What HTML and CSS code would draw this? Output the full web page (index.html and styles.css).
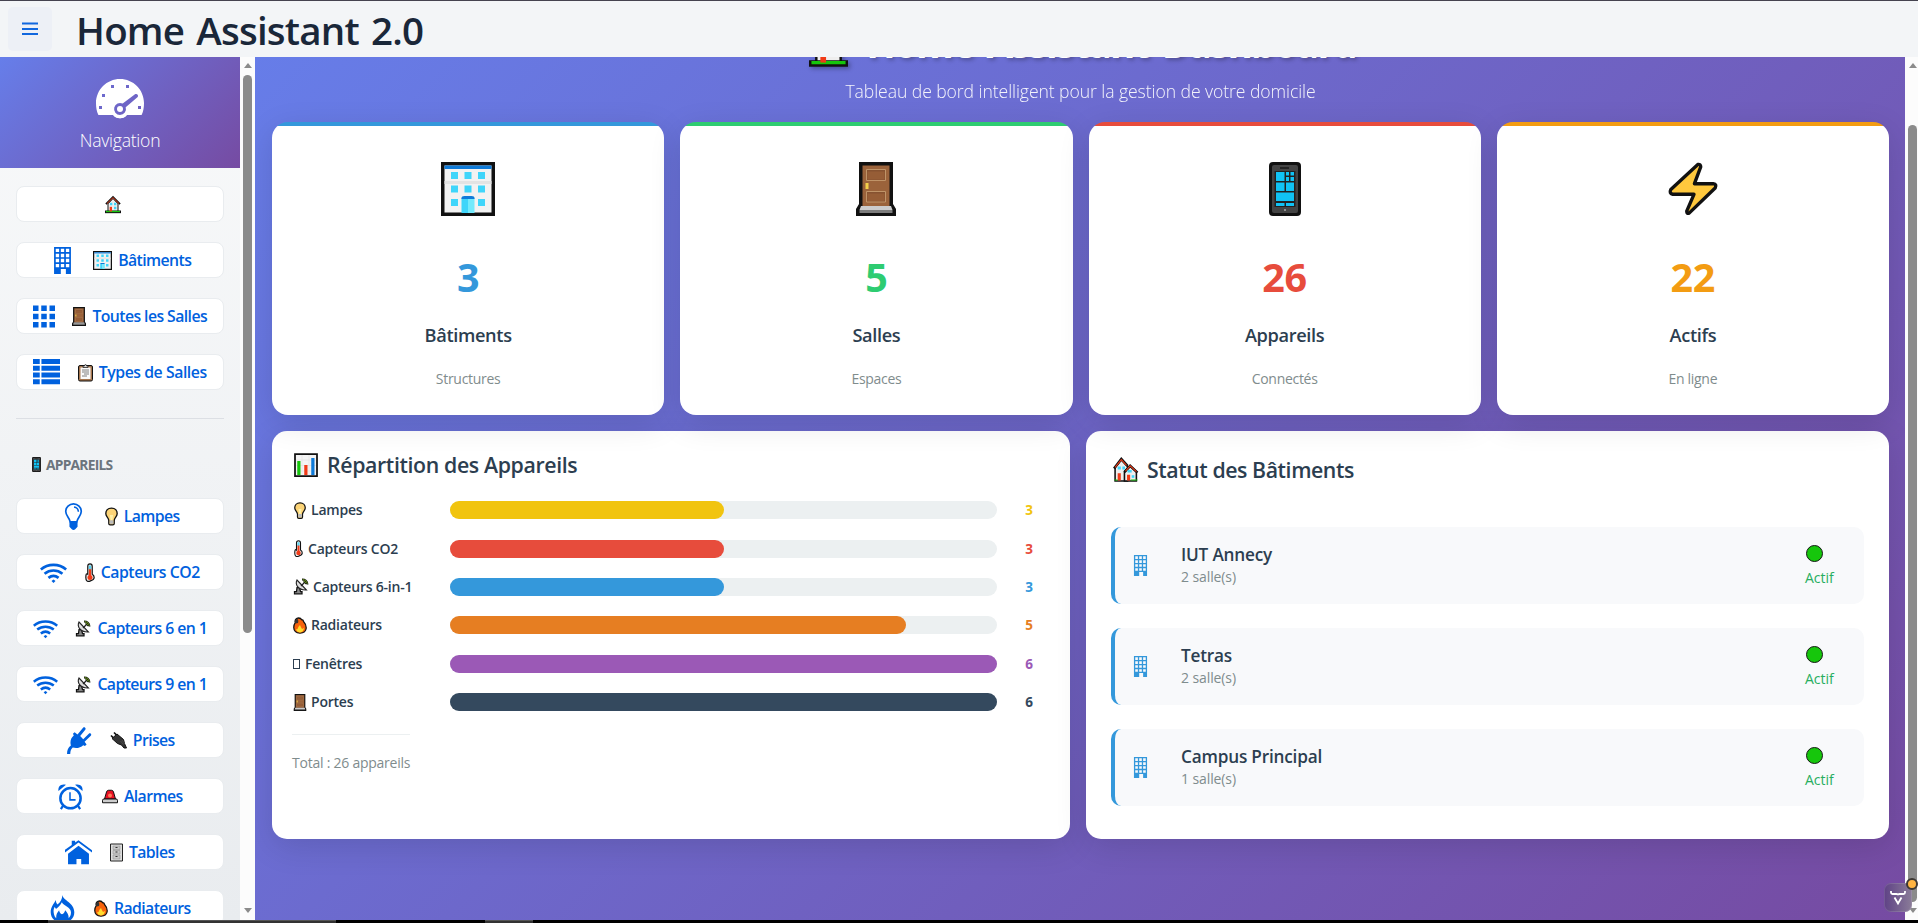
FILE: index.html
```
<!DOCTYPE html>
<html lang="fr">
<head>
<meta charset="utf-8">
<title>Home Assistant 2.0</title>
<link rel="stylesheet" href="styles.css">
</head>
<body>
<svg class="defs" aria-hidden="true">
  <symbol id="i-building" viewBox="0 0 16 16"><path fill-rule="evenodd" d="M3 0h10v16h-3v-3H7v3H3zM4 1v2h2V1zm3 0v2h2V1zm3 0v2h2V1zM4 4v2h2V4zm3 0v2h2V4zm3 0v2h2V4zM4 7v2h2V7zm3 0v2h2V7zm3 0v2h2V7zM4 10v2h2v-2zm3 0v2h2v-2zm3 0v2h2v-2z"/></symbol>
  <symbol id="i-grid" viewBox="0 0 16 16"><path d="M0 0h4v4H0zM6 0h4v4H6zM12 0h4v4h-4zM0 6h4v4H0zM6 6h4v4H6zM12 6h4v4h-4zM0 12h4v4H0zM6 12h4v4H6zM12 12h4v4h-4z"/></symbol>
  <symbol id="i-list" viewBox="0 0 16 16"><path d="M0 0h4v3H0zM5 0h11v3H5zM0 4h4v3H0zM5 4h11v3H5zM0 8h4v3H0zM5 8h11v3H5zM0 12h4v3H0zM5 12h11v3H5z"/></symbol>
  <symbol id="i-bulb" viewBox="0 0 16 16"><path d="M8 .5a4.600 4.600 0 0 0-4.600 4.600c0 2.300 2.300 3.700 2.600 6h4c.3-2.300 2.600-3.700 2.600-6A4.600 4.600 0 0 0 8 .5z" fill="none" stroke="currentColor"/><path d="M8.300 2.300a2.900 2.900 0 0 1 2.600 2.900" fill="none" stroke="currentColor" stroke-width=".9"/><path d="M5.600 11h4.800v3L9 15.500c-.5.6-1.500.6-2 0L5.600 14z"/></symbol>
  <symbol id="i-wifi" viewBox="0 0 16 16"><g fill="none" stroke="currentColor" stroke-width="1.600"><path d="M.5 6.200c4.200-3.600 10.800-3.600 15 0M2.700 8.700c3.100-2.500 7.500-2.500 10.600 0M5 11.200c1.900-1.500 4.100-1.500 6 0"/></g><path d="M8 12.200l1.200.8L8 14.200 6.800 13z"/></symbol>
  <symbol id="i-plug" viewBox="0 0 16 16"><path d="M1.200 16c0-2.300.7-4 2.300-5-.7-2.300 0-4.500 1.700-5.900L4.700 4l1-.9 1.700 1.400 3.300-4c.8-.8 2 .3 1.300 1.100L9 5.400l1.800 1.800 3.300-3.200c.9-.7 1.900.4 1.200 1.200l-3.700 3.600 1.200 1.600-1 .9-1-.5c-1.600 1.600-4 2-6.200 1.400-1 .8-1.400 2-1.500 3.800z"/></symbol>
  <symbol id="i-alarm" viewBox="0 0 16 16"><g fill="none" stroke="currentColor"><circle cx="8" cy="9" r="6" stroke-width="1.500"/><path d="M7.700 5.500V10H11" stroke-width=".9"/><path d="M3.700 13.300L2.300 15.500M12.300 13.300l1.400 2.200" stroke-width="1.300"/></g><path d="M.9 4.800C.4 2 2.500.2 5.300 1.100zM15.100 4.800c.5-2.800-1.600-4.600-4.400-3.700z"/></symbol>
  <symbol id="i-home" viewBox="0 0 16 16"><path d="M16 8L8 2.100 0 8l-.1-1.500L4 3.600V1h2v1.100L8 .7l8 5.900zM8 4l6.200 4.700V15H9.600v-3.200H6.800V15H1.800V8.700z"/></symbol>
  <symbol id="i-fire" viewBox="0 0 16 16"><path fill-rule="evenodd" d="M7.900 0C8.300 3.300 15 4.500 15 10.200c0 2.900-1.700 4.800-4 5.800H5C2.700 15 1 13 1 10.200c0-3 1.700-4.800 3.100-7.200 0 1.300.3 2 .9 2.600C6.800 4.300 7.800 2.600 7.900 0zM7.600 4.300C6.800 6 5.500 7.300 4.300 8.200 3.800 7.900 3.600 7.600 3.500 7 2.600 8.300 2.500 9.700 3 11.500c.2.900.7 1.700 1.300 2.300-.2-1.900.4-3.300 1.700-4.800.2 1.300.7 2 1.700 2.400.9-.3 1.500-1 1.900-2.400 1.400 1.500 2.200 3 2 4.800 1-1 1.500-2.300 1.400-3.800-.2-2.800-4-3.300-5.400-5.700z"/></symbol>

  <symbol id="e-house" viewBox="0 0 24 26"><path d="M4.500 12v12h15V12L12 4z" fill="#eee" stroke="#111" stroke-width="1.500"/><path d="M1.500 12.500L12 2l10.500 10.500" fill="none" stroke="#111" stroke-width="3"/><path d="M3 11.500L12 2.700l9 8.800" fill="none" stroke="#e8401c" stroke-width="1.500"/><path fill="#3fd5fa" d="M7.500 10.500h3.500v3.500H7.500zM13.500 10.500H17V14h-3.500zM13.500 16.500H17V20h-3.500z"/><path fill="#111" d="M0 22h24v4H0z"/><path fill="#16c60c" d="M1.500 22.500H22.500V24.500h-21z"/><path fill="#f03a17" d="M7 16.500h3.500v7H7z"/></symbol>
  <symbol id="e-office" viewBox="0 0 54 54"><path fill="#111" d="M0 0h54v54H0z"/><path fill="#f2f2f2" d="M3.500 3.500h47v47h-47z"/><path fill="#0f7bd9" d="M3.500 3.500h47V7h-47z"/><path fill="#e3e3e3" d="M3.500 19h47v3h-47z"/><path fill="#3fd5fa" d="M10 10h7v7h-7zM23.500 10h7v7h-7zM37 10h7v7h-7zM10 23.500h7v7h-7zM23.500 23.500h7v7h-7zM37 23.500h7v7h-7zM10 37h7v7h-7zM37 37h7v7h-7zM20.500 36H27v15h-6.500z"/><path fill="#74eafc" d="M27 36h6.500v15H27z"/><path fill="#0f7bd9" d="M20.500 37v-1q0-2 3-2h7q3 0 3 2v1z"/></symbol>
  <symbol id="e-door" viewBox="0 0 40 54"><path fill="#111" d="M3 0h34v42l3 5v7H0v-7l3-5z"/><path fill="#9b633b" d="M6.500 3.500h27V44h-27z"/><path fill="#865230" stroke="#c09468" d="M10.500 7.500h19v11h-19zM10.500 29.500h19v10.500h-19z"/><path fill="#965d36" d="M11.500 9.500h17v8h-17zM11.500 31.500h17V39h-17z"/><path fill="#f2d04a" d="M9.500 21h3v6h-3z"/><path fill="#ccc" d="M5 44h30l1.500 4h-33z"/><path fill="#7c7c7c" d="M3.500 48h33v3h-33z"/></symbol>
  <symbol id="e-clip" viewBox="0 0 30 36"><rect x="1" y="4" width="28" height="31" rx="3" fill="#a5754d" stroke="#111" stroke-width="2"/><path fill="#fafafa" d="M5 8h20v23H5z"/><path d="M10 8V5h3q0-3 2-3t2 3h3v3z" fill="#ddd" stroke="#222" stroke-width="1.500"/><path stroke="#555" stroke-width="1.500" d="M8 13h14M8 17h14M12 21h10M8 25h10"/></symbol>
  <symbol id="e-phone" viewBox="0 0 32 54"><rect width="32" height="54" rx="4" fill="#111"/><rect x="3" y="3" width="26" height="48" rx="2" fill="#444"/><path fill="#222" d="M5.500 9h21v36h-21zM11 5h9v2h-9z"/><path fill="#10c3f5" d="M7 10h8.500v9H7zM17 10h3v3.500h-3zM21.500 10H25v3.500h-3.500zM17 15h3v4h-3zM21.500 15H25v4h-3.500zM7 20.500h8.500V29H7zM17 20.500h8V29h-8zM7 30.500h18V39H7zM7 41h8.500v3H7zM17 41h8v3h-8z"/><circle cx="16" cy="48" r="1" fill="#aaa"/></symbol>
  <symbol id="e-bolt" viewBox="0 0 54 56"><path d="M32 2.500L4 28.500Q2 32.500 6 33.500H28L20.500 51q0 3 2.500 2L50 27q2-4-2-4.500H28.500L35 5q0-3-3-2.500z" fill="#ffc83d" stroke="#111" stroke-width="3.500" stroke-linejoin="round"/></symbol>
  <symbol id="e-bulb" viewBox="0 0 24 34"><path d="M12 1.500C5 1.500 1.500 6.500 1.500 11.500c0 6 5 7 5.500 13V30q0 2.500 2.500 2.500h5Q17 32.500 17 30v-5.500c.5-6 5.500-7 5.500-13 0-5-3.500-10-10.500-10z" fill="#fcd477" stroke="#111" stroke-width="2.500"/><path fill="#fff0a8" d="M9 14h6l-1.500 10h-3z"/><path fill="#bbb" d="M8.500 24h7v6.500h-7z"/></symbol>
  <symbol id="e-thermo" viewBox="0 0 18 34"><path d="M5 6q0-4.500 4-4.500T13 6v14q3.500 2 3.500 6T9 32.500 1.500 26 5 20z" fill="#eee" stroke="#111" stroke-width="2.200"/><path fill="#55d5f5" d="M7 4.500h4V12H7z"/><path d="M9 11v14" stroke="#f03a17" stroke-width="4"/><circle cx="9" cy="26" r="4.500" fill="#f03a17"/></symbol>
  <symbol id="e-dish" viewBox="0 0 32 34"><path d="M3 31.500V27h4l1-8h5l2 8h3v4.500z" fill="#888" stroke="#111" stroke-width="2.500"/><path d="M8 4C4 12 9 25 27 24z" fill="#ddd" stroke="#222" stroke-width="2.200"/><path d="M16 16l6-6" stroke="#222" stroke-width="2.500"/><path d="M18 3q10 0 11 10M21 7q4 1 5 5" stroke="#161616" stroke-width="4" fill="none"/><path d="M19 2.500q9 1 10 9M21 6q4 1 5 5" stroke="#6c9b16" stroke-width="1.700" fill="none"/></symbol>
  <symbol id="e-plug" viewBox="0 0 34 34"><path d="M2 7l5 5M8 1l5 5" stroke="#111" stroke-width="3.500"/><path d="M4 13L14 4l13 11 2 8 4 9h-5l-5-6-8-3z" fill="#333" stroke="#111" stroke-width="2"/><path d="M21 18l6 7M24 16l6 8" stroke="#666" stroke-width="1"/></symbol>
  <symbol id="e-siren" viewBox="0 0 32 28"><path d="M5 19L9 5q1-3.500 4-3.500h6q3 0 4 3.500l4 14z" fill="#e81224" stroke="#111" stroke-width="2"/><circle cx="16" cy="12" r="4" fill="#ff7a58"/><path fill="#ccc" stroke="#111" stroke-width="2" d="M1 26.500v-5Q1 19 4 19h24q3 0 3 2.500v5z"/></symbol>
  <symbol id="e-cabinet" viewBox="0 0 26 36"><path fill="#ddd" stroke="#222" stroke-width="2" d="M1 1h24v34H1z"/><path fill="#c8c8c8" stroke="#888" d="M6 5h14v7H6zM6 14h14v7H6zM6 23h14v8H6z"/><path stroke="#333" stroke-width="2" d="M11 8h4M11 17h4M11 26h4"/></symbol>
  <symbol id="e-fire" viewBox="0 0 28 34"><path d="M7 3q7-3 11 3c2-1 2 0 3 3 3 3 5.500 8 5.500 13q-1 10-12.500 10.500Q2 32 1.500 21q0-6 3-10Q3 6 7 3z" fill="#f7630c" stroke="#111" stroke-width="2.500"/><path d="M7 3q5 1 3 9l-5 1q-2-7 2-10z" fill="#333"/><path d="M6 24q2 1 3 0 2-6 5-8 2 5 4 8l4-2q-1 8-8 9-7-1-8-7z" fill="#ffdc2e"/></symbol>
  <symbol id="e-chart" viewBox="0 0 48 48"><path fill="#f4f4f4" stroke="#111" stroke-width="3.500" d="M2 2h44v44H2z"/><path stroke="#ddd" d="M4 14h40M4 25h40M4 36h40M16 4v40M30 4v40"/><path fill="#16c60c" d="M6.500 16H13v28H6.500z"/><path fill="#f03a17" d="M20.500 24H27v20h-6.500z"/><path fill="#0f7bd9" d="M34.500 10H41v34h-6.500z"/></symbol>
  <symbol id="e-houses" viewBox="0 0 50 48"><path fill="#eee" stroke="#111" stroke-width="3" d="M4 46V20L16 5l12 13v28z"/><path fill="#eee" stroke="#111" stroke-width="3" d="M22 46V28l11-11 12 11v18z"/><path d="M2 22L16 4l12 13M22 29l11-12 14 13" fill="none" stroke="#111" stroke-width="5"/><path d="M4 20L16 5l10 11M24 27l9-10 12 11" fill="none" stroke="#f03a17" stroke-width="2"/><path fill="#3fd5fa" d="M9 18h6v6H9zM18 18h5v6h-5zM28 25h8v5h-8z"/><path fill="#f03a17" d="M9 31h6v14H9zM27 34h6v11h-6z"/><path fill="#3fd5fa" d="M36 35h5v5h-5z"/><path stroke="#16c60c" stroke-width="2" d="M3 44h6M34 44h13"/></symbol>
</svg>

<div class="app">
  <header class="navbar">
    <button class="toggle" aria-label="Menu"><svg viewBox="0 0 16 14"><path d="M0 .6h16v2H0zM0 6h16v2H0zM0 11h16v2H0z"/></svg></button>
    <h1>Home Assistant 2.0</h1>
  </header>

  <div class="body">
    <nav class="drawer">
      <div class="drawer-head">
        <svg class="gauge" viewBox="0 0 16 16"><path fill="#fff" fill-rule="evenodd" d="M8 1C3.600 1 0 4.600 0 9c0 1.400.2 2.800.8 4h4.900a3 3 0 0 0 4.600 0h4.900c.6-1.200.8-2.600.8-4 0-4.400-3.600-8-8-8zM5 3h1v1H5zm5 0h1v1h-1zM2 6h1v1H2zM1 10h1v1H1zm13 0h1v1h-1zM8 13a2 2 0 1 1 .9-3.800L13 6.100c.6-.4 1.300.3.9.9L9.900 10.400A2 2 0 0 1 8 13z"/><circle cx="8" cy="11" r="1" fill="#fff"/><path d="M5.700 13a3 3 0 0 0 4.600 0z" fill="#fff"/></svg>
        <span>Navigation</span>
      </div>
      <div class="menu">
        <a class="item solo"><svg class="em" style="width:16px"><use href="#e-house"/></svg></a>
        <a class="item"><svg class="ic"><use href="#i-building"/></svg><svg class="em" style="width:19px"><use href="#e-office"/></svg><b>Bâtiments</b></a>
        <a class="item"><svg class="ic" style="width:22px"><use href="#i-grid"/></svg><svg class="em" style="width:14px"><use href="#e-door"/></svg><b>Toutes les Salles</b></a>
        <a class="item"><svg class="ic"><use href="#i-list"/></svg><svg class="em" style="width:15px"><use href="#e-clip"/></svg><b class="types">Types de Salles</b></a>
      </div>
      <div class="rule"></div>
      <div class="section"><svg><use href="#e-phone"/></svg><span>APPAREILS</span></div>
      <div class="menu devices">
        <a class="item"><svg class="ic"><use href="#i-bulb"/></svg><svg class="em" style="width:13px"><use href="#e-bulb"/></svg><b>Lampes</b></a>
        <a class="item"><svg class="ic"><use href="#i-wifi"/></svg><svg class="em" style="width:10px"><use href="#e-thermo"/></svg><b class="types">Capteurs CO2</b></a>
        <a class="item"><svg class="ic" style="width:25px"><use href="#i-wifi"/></svg><svg class="em" style="width:16px"><use href="#e-dish"/></svg><b>Capteurs 6 en 1</b></a>
        <a class="item"><svg class="ic" style="width:25px"><use href="#i-wifi"/></svg><svg class="em" style="width:16px"><use href="#e-dish"/></svg><b>Capteurs 9 en 1</b></a>
        <a class="item"><svg class="ic"><use href="#i-plug"/></svg><svg class="em" style="width:17px"><use href="#e-plug"/></svg><b>Prises</b></a>
        <a class="item"><svg class="ic"><use href="#i-alarm"/></svg><svg class="em" style="width:16px"><use href="#e-siren"/></svg><b>Alarmes</b></a>
        <a class="item"><svg class="ic"><use href="#i-home"/></svg><svg class="em" style="width:13px"><use href="#e-cabinet"/></svg><b>Tables</b></a>
        <a class="item"><svg class="ic"><use href="#i-fire"/></svg><svg class="em" style="width:14px"><use href="#e-fire"/></svg><b>Radiateurs</b></a>
      </div>
    </nav>
    <div class="bar left"><i class="up"></i><i class="thumb"></i><i class="down"></i></div>

    <main>
      <div class="content">
        <div class="hero">
          <h2><svg><use href="#e-house"/></svg><span>Home Assistant Dashboard</span></h2>
          <p>Tableau de bord intelligent pour la gestion de votre domicile</p>
        </div>
        <div class="stats">
          <section class="stat blue"><svg><use href="#e-office"/></svg><strong>3</strong><h3>Bâtiments</h3><p>Structures</p></section>
          <section class="stat green"><svg><use href="#e-door"/></svg><strong>5</strong><h3>Salles</h3><p>Espaces</p></section>
          <section class="stat red"><svg><use href="#e-phone"/></svg><strong>26</strong><h3>Appareils</h3><p>Connectés</p></section>
          <section class="stat orange"><svg><use href="#e-bolt"/></svg><strong>22</strong><h3>Actifs</h3><p>En ligne</p></section>
        </div>
        <div class="panels">
          <section class="panel chart">
            <h3><svg><use href="#e-chart"/></svg><span>Répartition des Appareils</span></h3>
            <div class="row" style="color:#f1c40f"><div class="name"><svg style="width:14px"><use href="#e-bulb"/></svg>Lampes</div><div class="track"><div class="fill" style="width:50%"></div></div><b>3</b></div>
            <div class="row" style="color:#e74c3c"><div class="name"><svg style="width:11px"><use href="#e-thermo"/></svg>Capteurs CO2</div><div class="track"><div class="fill" style="width:50%"></div></div><b>3</b></div>
            <div class="row" style="color:#3498db"><div class="name"><svg style="width:16px"><use href="#e-dish"/></svg>Capteurs 6-in-1</div><div class="track"><div class="fill" style="width:50%"></div></div><b>3</b></div>
            <div class="row" style="color:#e67e22"><div class="name"><svg style="width:14px"><use href="#e-fire"/></svg>Radiateurs</div><div class="track"><div class="fill" style="width:83.333%"></div></div><b>5</b></div>
            <div class="row" style="color:#9b59b6"><div class="name"><i class="tofu"></i>Fenêtres</div><div class="track"><div class="fill" style="width:100%"></div></div><b>6</b></div>
            <div class="row" style="color:#34495e"><div class="name"><svg style="width:14px"><use href="#e-door"/></svg>Portes</div><div class="track"><div class="fill" style="width:100%"></div></div><b>6</b></div>
            <p class="total">Total : 26 appareils</p>
          </section>
          <section class="panel status">
            <h3><svg><use href="#e-houses"/></svg><span>Statut des Bâtiments</span></h3>
            <div class="site"><svg><use href="#i-building"/></svg><div class="info"><h4>IUT Annecy</h4><p>2 salle(s)</p></div><div class="state"><i></i><span>Actif</span></div></div>
            <div class="site"><svg><use href="#i-building"/></svg><div class="info"><h4>Tetras</h4><p>2 salle(s)</p></div><div class="state"><i></i><span>Actif</span></div></div>
            <div class="site"><svg><use href="#i-building"/></svg><div class="info"><h4>Campus Principal</h4><p>1 salle(s)</p></div><div class="state"><i></i><span>Actif</span></div></div>
          </section>
        </div>
      </div>
    </main>
    <div class="bar right"><i class="up"></i><i class="thumb"></i><i class="down"></i></div>
  </div>
  <footer class="strip"><i class="seg wide"></i><i class="seg short"></i></footer>
  <div class="devtools"><svg viewBox="0 0 28 29"><path d="M7 8v1.500q0 1.500 1.500 1.500h4q1.500 0 1.500 1.200 0-1.200 1.500-1.200h4Q21 11 21 9.500V8M10.500 14.500L14 20.500l3.500-6" fill="none" stroke="#fff" stroke-width="1.800"/></svg><i></i></div>
</div>
</body>
</html>
```
FILE: styles.css
```
* { box-sizing: border-box; }
body { margin: 0; font-family: "Open Sans", "Noto Sans", sans-serif; color: #2c3e50; overflow: hidden; }
h1, h2, h3, h4, p { margin: 0; }
svg { display: block; flex: none; }
.defs { position: absolute; width: 0; height: 0; }
.app { position: relative; display: flex; flex-direction: column; height: 923px; }

.navbar { flex: none; display: flex; align-items: center; height: 57px; padding: 0 8px; border-top: 1px solid #45434f; background: #f3f5f7; }
.toggle { width: 44px; height: 44px; padding: 0; border: 0; border-radius: 5px; background: #edf0f6; display: flex; align-items: center; justify-content: center; }
.toggle svg { width: 16px; height: 14px; fill: #1167de; }
.navbar h1 { margin-left: 24px; padding-top: 2px; font-size: 38.500px; line-height: 50px; font-weight: 600; letter-spacing: -.8px; word-spacing: 3px; color: #1a2739; white-space: nowrap; }

.body { flex: 1; min-height: 0; display: flex; }
.drawer { flex: none; width: 240px; overflow: hidden; background: linear-gradient(#f8f9fa, #e9ecef); }
.drawer-head { height: 111px; padding-top: 19px; display: flex; flex-direction: column; align-items: center; background: linear-gradient(135deg, #667eea, #764ba2); color: #fff; }
.gauge { width: 48px; height: 48px; }
.drawer-head span { margin-top: 4px; font-size: 17.600px; line-height: 24px; font-weight: 300; letter-spacing: -.25px; }
.menu { display: flex; flex-direction: column; gap: 20px; padding: 18px 16px 0; }
.item { height: 36px; display: flex; align-items: center; justify-content: center; flex: none; border: 1px solid #e9ecef; border-radius: 8px; background: #fff; color: #0061de; font-size: 15.800px; white-space: nowrap; }
.item b { font-weight: 600; letter-spacing: -.58px; margin-left: 6px; line-height: 22px; }
.item b.types { letter-spacing: -.44px; }
.item .ic { width: 27px; height: 27px; margin-right: 17.500px; fill: currentColor; }
.item .em { height: 19px; }
.item.solo { padding-right: 14px; }
.rule { height: 1px; margin: 28px 16px 0; background: #dcdfe4; }
.section { display: flex; align-items: center; gap: 5px; height: 20px; margin: 35.500px 0 0 32px; font-size: 13.800px; font-weight: 700; letter-spacing: -.75px; color: #6c757d; }
.section svg { width: 9px; height: 15px; }
.devices { padding-top: 23.500px; }

.bar { flex: none; display: flex; flex-direction: column; align-items: center; background: #fcfcfc; }
.bar.left { width: 15px; }
.bar.right { width: 13px; padding-left: 2px; }
.bar i { display: block; flex: none; }
.up, .down { width: 0; height: 0; border: 4.500px solid transparent; border-top: 0; border-bottom: 5px solid #8b8b8b; margin-top: 6px; }
.down { border-bottom: 0; border-top: 5px solid #8b8b8b; margin: auto 0 7px; }
.thumb { width: 9px; border-radius: 5px; background: #8b8b8b; }
.left .thumb { margin-top: 7px; height: 558px; }
.right .thumb { margin-top: 57px; height: 777px; }

main { flex: 1; min-width: 0; overflow: hidden; }
.content { margin-top: -58px; height: 921px; padding: 24px 16px 0 17px; background: linear-gradient(135deg, #667eea, #764ba2); }
.hero { height: 99px; display: flex; flex-direction: column; align-items: center; color: #fff; }
.hero h2 { display: flex; align-items: flex-end; gap: 18px; height: 48px; padding-left: 4px; font-size: 38.500px; line-height: 54px; font-weight: 700; letter-spacing: -1.730px; word-spacing: 5px; text-shadow: 2px 2px 4px rgba(0,0,0,.3); white-space: nowrap; }
.hero h2 span { margin-bottom: 1px; }
.hero h2 svg { width: 39px; height: 45px; margin-bottom: 3px; filter: drop-shadow(2px 2px 2px rgba(0,0,0,.3)); }
.hero p { margin-top: 8px; font-size: 17.600px; line-height: 24px; font-weight: 300; letter-spacing: -.075px; opacity: .92; }

.stats { position: relative; z-index: 1; display: grid; grid-template-columns: repeat(4, 1fr); gap: 16px; height: 293px; }
.stat { display: flex; flex-direction: column; align-items: center; padding-top: 40px; border-radius: 16px; background: linear-gradient(var(--tone) 4px, #fff 4px); box-shadow: 0 8px 32px rgba(0,0,0,.12); }
.blue { --tone: #3498db; }
.green { --tone: #2ecc71; }
.red { --tone: #e74c3c; }
.orange { --tone: #f39c12; }
.stat svg { width: 54px; height: 54px; }
.stat strong { margin-top: 33px; font-size: 39.500px; line-height: 56px; font-weight: 700; color: var(--tone); letter-spacing: -.1px; }
.stat h3 { margin-top: 17px; font-size: 18.200px; line-height: 26px; font-weight: 600; letter-spacing: -.35px; }
.stat p { margin-top: 21px; font-size: 14px; line-height: 20px; letter-spacing: -.3px; color: #7f8c8d; }

.panels { display: grid; grid-template-columns: 798px 803px; gap: 16px; margin-top: 16px; height: 408px; }
.panel { border-radius: 15px; background: #fff; box-shadow: 0 8px 32px rgba(0,0,0,.12); }
.panel h3 { display: flex; align-items: center; font-size: 21.300px; line-height: 30px; font-weight: 600; letter-spacing: -.37px; }
.chart { padding: 18.500px 20px 0; }
.chart h3 { height: 30px; margin-bottom: 11.500px; }
.chart h3 svg { width: 24px; height: 24px; margin: 0 9px 0 2px; }
.row { display: flex; align-items: center; height: 38.400px; }
.name { flex: none; width: 158px; display: flex; align-items: center; gap: 4.500px; padding-left: .5px; font-size: 14px; line-height: 20px; font-weight: 600; letter-spacing: -.22px; color: #2c3e50; white-space: nowrap; }
.name svg { height: 17px; }
.tofu { width: 7px; height: 10px; margin-right: 1px; border: 1px solid #2c3e50; }
.track { flex: none; width: 547px; height: 18px; border-radius: 9px; background: #ecf0f1; }
.fill { height: 18px; border-radius: 9px; background: currentColor; }
.row b { flex: none; width: 64px; text-align: center; font-size: 13.500px; line-height: 20px; }
.total { width: 118px; margin-top: 12.500px; padding-top: 18px; border-top: 1px solid #ecf0f1; font-size: 14px; line-height: 20px; letter-spacing: -.24px; color: #7f8c8d; white-space: nowrap; }
.status { padding: 24px 25px 0; display: flex; flex-direction: column; gap: 24px; }
.status h3 { height: 48px; padding-bottom: 19px; letter-spacing: -.43px; }
.status h3 svg { width: 26px; height: 25px; margin: 0 8px 0 2px; }
.site { flex: none; display: flex; align-items: center; height: 77px; padding: 0 40px 0 14.500px; border-left: 4px solid #3498db; border-radius: 10px; background: #f8f9fb; }
.site > svg { width: 21px; height: 21px; margin-right: 30.500px; fill: #3498db; }
.site h4 { font-size: 17.200px; line-height: 24px; font-weight: 600; letter-spacing: -.2px; }
.site p { margin-top: -1px; font-size: 14px; line-height: 22px; letter-spacing: -.1px; color: #7f8c8d; }
.info { flex: 1; }
.state { display: flex; flex-direction: column; width: 30px; margin-right: -11px; padding-top: 2px; font-size: 14px; line-height: 20px; color: #27ae60; }
.state i { width: 17px; height: 17px; margin: 0 0 6px 1px; border: 1.500px solid #161616; border-radius: 50%; background: #16c60c; }

.strip { flex: none; height: 3px; display: flex; background: #000; }
.seg { height: 3px; background: #333; border-top: 1px solid #555; }
.wide { width: 288px; margin-left: 48px; }
.short { width: 48px; margin-left: 149px; }

.devtools { position: absolute; right: 6px; top: 883px; width: 28px; height: 29px; border-radius: 7px; background: linear-gradient(90deg, #5f4286, #8a7c98); box-shadow: inset 0 0 0 1px rgba(255,255,255,.12); }
.devtools i { position: absolute; top: -5px; right: -6px; width: 12px; height: 12px; border: 2px solid #3d3833; border-radius: 50%; background: #ffb441; }
```
